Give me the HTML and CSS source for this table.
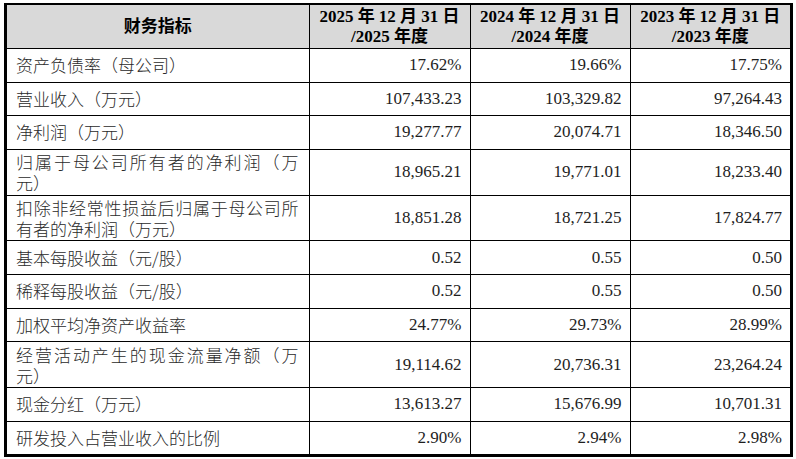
FILE: index.html
```html
<!DOCTYPE html>
<html lang="zh-CN">
<head>
<meta charset="utf-8">
<link rel="stylesheet" href="styles.css">
</head>
<body>
<div class="frame">
<table class="fin">
<colgroup><col class="c1"><col class="c2"><col class="c3"><col class="c4"></colgroup>
<thead>
<tr>
<th>财务指标</th>
<th>2025 年 12 月 31 日<br>/2025 年度</th>
<th>2024 年 12 月 31 日<br>/2024 年度</th>
<th>2023 年 12 月 31 日<br>/2023 年度</th>
</tr>
</thead>
<tbody>
<tr><td class="name">资产负债率（母公司）</td><td class="num">17.62%</td><td class="num">19.66%</td><td class="num">17.75%</td></tr>
<tr><td class="name">营业收入（万元）</td><td class="num">107,433.23</td><td class="num">103,329.82</td><td class="num">97,264.43</td></tr>
<tr><td class="name">净利润（万元）</td><td class="num">19,277.77</td><td class="num">20,074.71</td><td class="num">18,346.50</td></tr>
<tr class="tall"><td class="name">归属于母公司所有者的净利润（万元）</td><td class="num">18,965.21</td><td class="num">19,771.01</td><td class="num">18,233.40</td></tr>
<tr class="tall"><td class="name">扣除非经常性损益后归属于母公司所有者的净利润（万元）</td><td class="num">18,851.28</td><td class="num">18,721.25</td><td class="num">17,824.77</td></tr>
<tr><td class="name">基本每股收益（元/股）</td><td class="num">0.52</td><td class="num">0.55</td><td class="num">0.50</td></tr>
<tr><td class="name">稀释每股收益（元/股）</td><td class="num">0.52</td><td class="num">0.55</td><td class="num">0.50</td></tr>
<tr><td class="name">加权平均净资产收益率</td><td class="num">24.77%</td><td class="num">29.73%</td><td class="num">28.99%</td></tr>
<tr class="tall"><td class="name">经营活动产生的现金流量净额（万元）</td><td class="num">19,114.62</td><td class="num">20,736.31</td><td class="num">23,264.24</td></tr>
<tr><td class="name">现金分红（万元）</td><td class="num">13,613.27</td><td class="num">15,676.99</td><td class="num">10,701.31</td></tr>
<tr><td class="name">研发投入占营业收入的比例</td><td class="num">2.90%</td><td class="num">2.94%</td><td class="num">2.98%</td></tr>
</tbody>
</table>
</div>
</body>
</html>
```

FILE: styles.css
```css
html, body {
  margin: 0;
  padding: 0;
  background: #fff;
}
body {
  padding: 3px 3px 0 4px;
  font-family: "Liberation Serif", "Noto Sans CJK SC", serif;
  font-size: 17px;
  color: #1e1e1e;
}
.frame {
  width: 783px;
  border: 3px solid #000;
  border-top-width: 2px;
}
.fin {
  width: 783px;
  table-layout: fixed;
  border-collapse: collapse;
}
.c1 { width: 302px; }
.c2 { width: 161px; }
.c3 { width: 160px; }
.c4 { width: 160px; }
.fin th, .fin td {
  border: 1px solid #000;
  padding: 0;
  line-height: 20px;
}
.fin tr > :first-child { border-left: none; }
.fin tr > :last-child { border-right: none; }
.fin thead th { border-top: none; }
.fin tbody tr:last-child td { border-bottom: none; }
.fin th {
  background: #d9d9d9;
  height: 43px;
  font-weight: 700;
  color: #000;
  text-align: center;
  vertical-align: middle;
}
.fin td {
  height: 32.6px;
  vertical-align: middle;
}
.fin tr.tall td { height: 44.8px; }
.name {
  font-family: "Noto Sans CJK SC", sans-serif;
  font-weight: 300;
  padding: 0 10px 0 9px !important;
  text-align: justify;
  text-spacing-trim: space-all;
  line-height: 20px;
  color: #2a2a2a;
}
.fin tr.tall .name { line-height: 21px; }
.num {
  text-align: right;
  padding: 0 8px 0 0 !important;
}
```
